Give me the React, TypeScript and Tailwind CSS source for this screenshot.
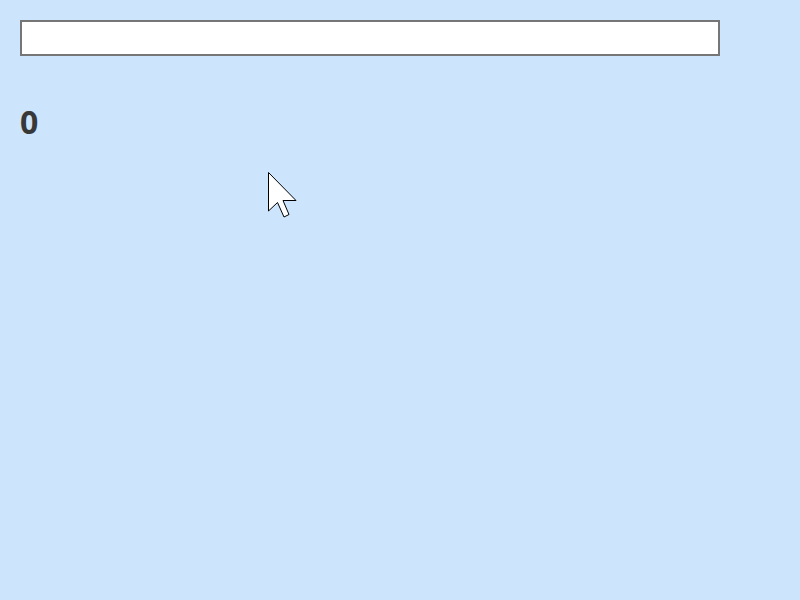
import React from 'react';

export default function App() {
  return (
    <div className="relative min-h-[600px] w-full bg-[#cce4fc] p-5" style={{ fontFamily: '"Open Sans", sans-serif' }}>
      <input
        type="text"
        className="block h-9 w-[700px] border-2 border-[#767676] bg-white px-2 text-base outline-none"
      />
      <h1 className="mt-[50px] text-[32px] font-bold leading-[32px] text-[#383838]">0</h1>

      {/* mouse pointer */}
      <svg className="absolute left-[267px] top-[171px]" width="32" height="48" viewBox="0 0 32 48">
        <path
          d="M1.5 1.5 L1.5 40 L10.5 31.5 L17 46 L22 43.5 L16 29.5 L29 29.5 Z"
          fill="white"
          stroke="black"
          strokeWidth="1"
          strokeLinejoin="miter"
        />
      </svg>
    </div>
  );
}
